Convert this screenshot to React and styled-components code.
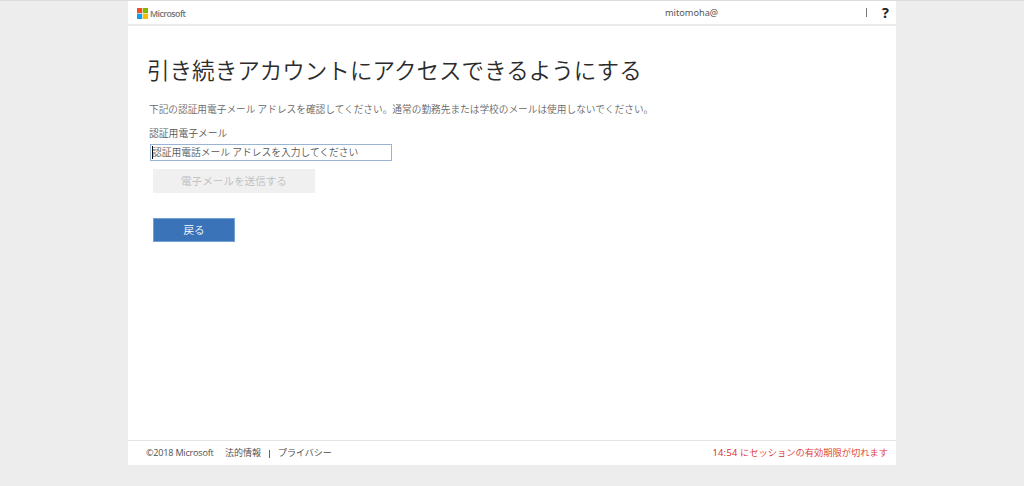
import React from "react";
import styled, { createGlobalStyle } from "styled-components";

const GlobalStyle = createGlobalStyle`
  * {
    box-sizing: border-box;
  }

  body {
    margin: 0;
    background: #ededed;
    font-family: "Noto Sans", "Noto Sans CJK JP", sans-serif;
    overflow: hidden;
  }
`;

const Page = styled.div`
  height: 486px;
  border-top: 1px solid #dcdcdc;
`;

const Container = styled.div`
  display: flex;
  flex-direction: column;
  width: 768px;
  height: 464px;
  margin: 0 auto;
  background: #fff;
  white-space: nowrap;
`;

const Header = styled.header`
  display: flex;
  align-items: center;
  height: 25px;
  padding: 0 7px 1px 9px;
  border-bottom: 2px solid #ebebeb;
`;

const Brand = styled.div`
  display: flex;
  align-items: center;
  gap: 2px;
  width: 528px;
  padding-top: 2px;
`;

const BrandName = styled.span`
  font-family: "Open Sans", sans-serif;
  font-size: 8.8px;
  font-weight: 600;
  line-height: 12px;
  letter-spacing: -0.55px;
  padding-top: 1px;
  color: #737373;
`;

const User = styled.span`
  flex: 1;
  padding-top: 1px;
  font-size: 9.2px;
  line-height: 12px;
  color: #555;
`;

const HeaderDivider = styled.span`
  width: 1px;
  height: 9px;
  margin-right: 15px;
  background: #777;
`;

const Help = styled.span`
  font-size: 14.5px;
  font-weight: 700;
  line-height: 14px;
  color: #222;
`;

const Main = styled.main`
  display: flex;
  flex: 1;
  flex-direction: column;
  align-items: flex-start;
  padding: 26px 19px 0;
  font-family: "Noto Sans CJK JP", sans-serif;
`;

const Title = styled.h1`
  margin: 0;
  font-size: 22.55px;
  font-weight: 350;
  line-height: 34px;
  color: #2b2b2b;
`;

const Description = styled.p`
  margin: 15px 0 0 2px;
  font-size: 9.69px;
  font-weight: 350;
  line-height: 16px;
  color: #666;
`;

const Label = styled.label`
  margin: 8px 0 0 2px;
  font-size: 9.8px;
  line-height: 16px;
  font-weight: 350;
  color: #555;
`;

const Field = styled.div`
  display: flex;
  align-items: center;
  width: 242px;
  height: 17px;
  margin: 3px 0 0 3px;
  padding-left: 1px;
  border: 1px solid #9ab5d3;
`;

const Caret = styled.span`
  width: 1px;
  height: 13px;
  margin-right: -1px;
  background: #000;
`;

const Placeholder = styled.span`
  font-size: 9.75px;
  font-weight: 350;
  line-height: 15px;
  color: #555;
`;

const Button = styled.button`
  width: ${(props) => props.$width}px;
  height: ${(props) => props.$height}px;
  margin: ${(props) => props.$top}px 0 0 6px;
  padding: 0;
  border: 1px solid ${(props) => (props.$primary ? "#75a0d3" : "#f0f0f0")};
  background: ${(props) => (props.$primary ? "#3b73b9" : "#f0f0f0")};
  color: ${(props) => (props.$primary ? "#fff" : "#bdbdbd")};
  font-family: inherit;
  font-size: 10.6px;
  font-weight: 350;
  line-height: 20px;
`;

const Footer = styled.footer`
  display: flex;
  align-items: center;
  height: 25px;
  padding: 0 8px 1px 18px;
  border-top: 1px solid #e3e3e3;
  font-size: 9px;
  line-height: 14px;
  color: #444;
`;

const Copyright = styled.span`
  width: 79px;
  font-family: "Open Sans", sans-serif;
  font-size: 9.1px;
  letter-spacing: -0.22px;
  color: #505050;
`;

const FooterLink = styled.a`
  font-family: "Noto Sans CJK JP", sans-serif;
  font-weight: 350;
`;

const FooterDivider = styled.span`
  width: 1px;
  height: 8px;
  margin: 2px 8px 0;
  background: #666;
`;

const Session = styled.span`
  margin-left: auto;
  font-size: 9.25px;
  font-weight: 350;
  color: #dc3030;
`;

const Time = styled.span`
  font-weight: 400;
  letter-spacing: 0.3px;
`;

const Logo = () => (
  <svg width="11" height="11" viewBox="0 0 11 11">
    <path fill="#f25022" d="M0 0h5.2v5.2H0z" />
    <path fill="#7fba00" d="M5.8 0H11v5.2H5.8z" />
    <path fill="#00a4ef" d="M0 5.8h5.2V11H0z" />
    <path fill="#ffb900" d="M5.8 5.8H11V11H5.8z" />
  </svg>
);

const App = () => {
  return (
    <Page>
      <GlobalStyle />
      <Container>
        <Header>
          <Brand>
            <Logo />
            <BrandName>Microsoft</BrandName>
          </Brand>
          <User>mitomoha@</User>
          <HeaderDivider />
          <Help>?</Help>
        </Header>
        <Main>
          <Title>引き続きアカウントにアクセスできるようにする</Title>
          <Description>
            下記の認証用電子メール アドレスを確認してください。通常の勤務先または学校のメールは使用しないでください。
          </Description>
          <Label>認証用電子メール</Label>
          <Field>
            <Caret />
            <Placeholder>認証用電話メール アドレスを入力してください</Placeholder>
          </Field>
          <Button $width={162} $height={24} $top={8} disabled>
            電子メールを送信する
          </Button>
          <Button $width={82} $height={24} $top={25} $primary>
            戻る
          </Button>
        </Main>
        <Footer>
          <Copyright>©2018 Microsoft</Copyright>
          <FooterLink>法的情報</FooterLink>
          <FooterDivider />
          <FooterLink>プライバシー</FooterLink>
          <Session>
            <Time>14:54</Time> にセッションの有効期限が切れます
          </Session>
        </Footer>
      </Container>
    </Page>
  );
};

export default App;
